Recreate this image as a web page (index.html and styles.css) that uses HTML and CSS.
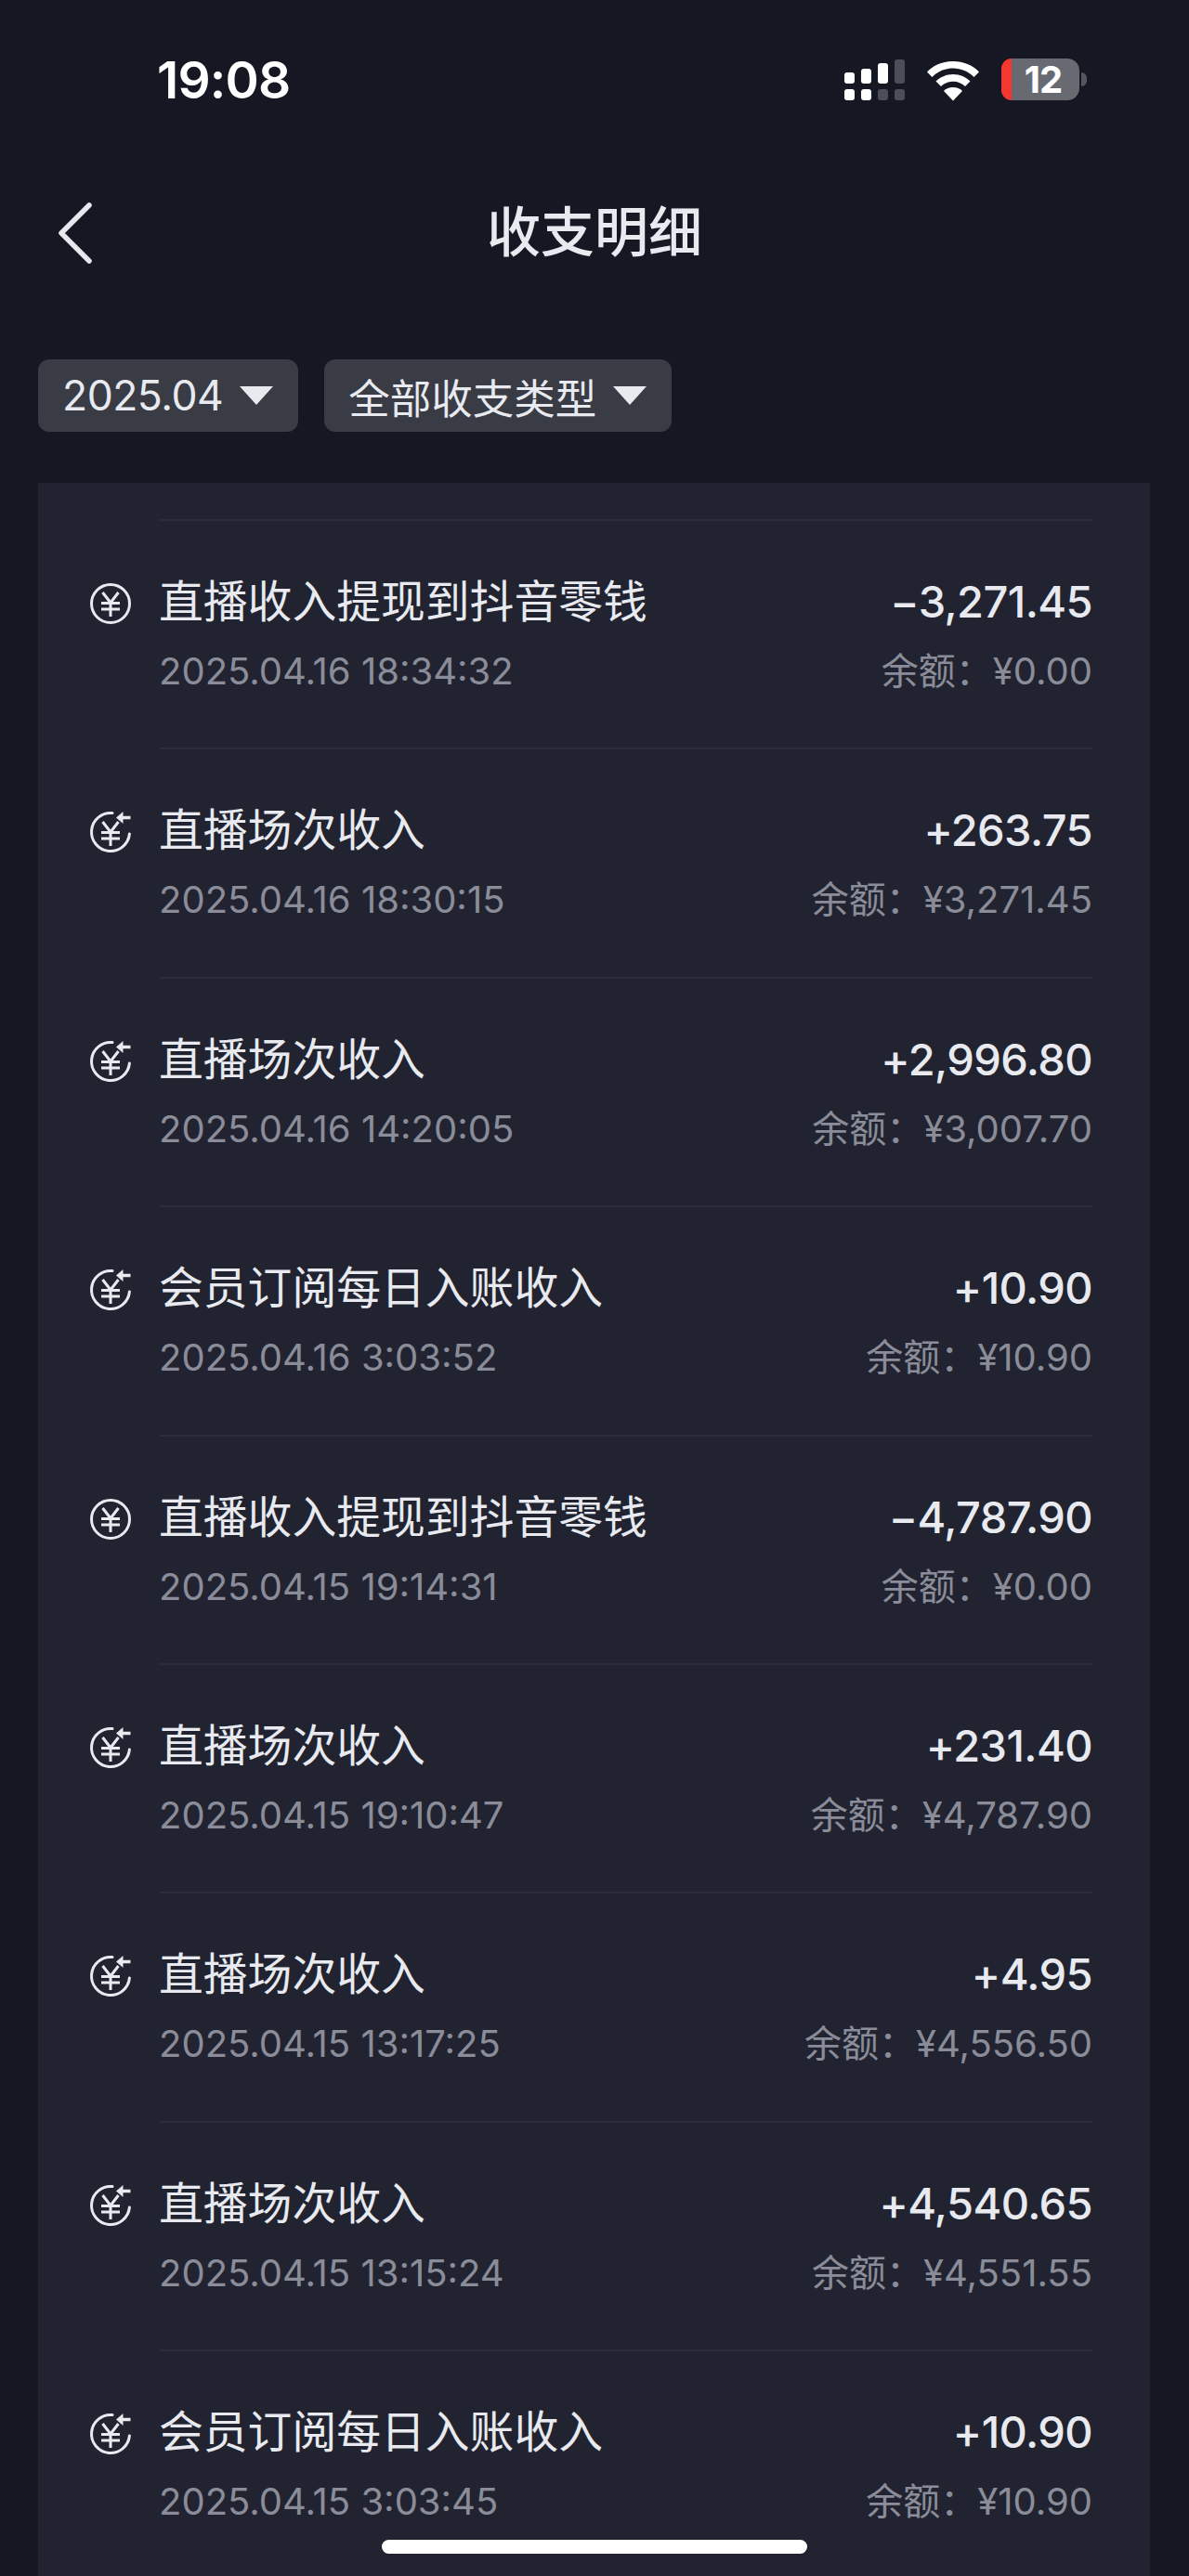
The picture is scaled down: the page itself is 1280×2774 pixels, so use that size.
FILE: index.html
```html
<!DOCTYPE html>
<html lang="zh-CN">
<head>
<meta charset="utf-8">
<title>收支明细</title>
<link rel="stylesheet" href="styles.css">
</head>
<body>
<svg class="defs" width="0" height="0" aria-hidden="true">
  <symbol id="yen-out" viewBox="0 0 50 50">
    <circle cx="25" cy="25" r="20.500" fill="none" stroke="currentColor" stroke-width="3"/>
    <path d="M16.500 13l8.500 11 8.500-11M15 24.500h20M15 31h20M25 24v15" fill="none" stroke="currentColor" stroke-width="3"/>
  </symbol>
  <symbol id="yen-in" viewBox="0 0 50 50">
    <path d="M45.400 27A20.500 20.500 0 1 1 27 4.600" fill="none" stroke="currentColor" stroke-width="3" stroke-linecap="round"/>
    <path d="M46.500 9.500H37" fill="none" stroke="currentColor" stroke-width="3.500"/>
    <path d="M31 9.500l7.500-6.500v13z" fill="currentColor"/>
    <path d="M16.500 14l8.500 11 8.500-11M15 25.500h20M15 32h20M25 25v15" fill="none" stroke="currentColor" stroke-width="3"/>
  </symbol>
</svg>

<header class="status">
  <span class="time">19:08</span>
  <div class="status-icons">
    <svg class="signal" width="66" height="46" viewBox="0 0 66 46">
      <g fill="#fff">
        <rect x="1" y="15" width="11" height="12" rx="3"/>
        <rect x="19" y="11" width="11" height="16" rx="3"/>
        <rect x="37" y="5" width="11" height="22" rx="3"/>
        <rect x="1" y="33" width="11" height="12" rx="3"/>
        <rect x="19" y="33" width="11" height="12" rx="3"/>
      </g>
      <g fill="#4b4d57">
        <rect x="55" y="1" width="11" height="26" rx="3"/>
        <rect x="37" y="33" width="11" height="12" rx="3"/>
        <rect x="55" y="33" width="11" height="12" rx="3"/>
      </g>
    </svg>
    <svg class="wifi" width="58" height="44" viewBox="0 0 58 44">
      <path d="M29 1C18 1 8 5 1 12.500l5.500 5.500C12.500 12 20.500 8.500 29 8.500S45.500 12 51.500 18l5.500-5.500C50 5 40 1 29 1z" fill="#fff"/>
      <path d="M29 15c-7.500 0-14 3-18.500 7.500l5.500 5.500c3.500-3.300 8-5.300 13-5.300s9.500 2 13 5.300l5.500-5.500C43 18 36.500 15 29 15z" fill="#fff"/>
      <path d="M29 29c-4 0-7.500 1.500-10 4l10 10.500L39 33c-2.500-2.500-6-4-10-4z" fill="#fff"/>
    </svg>
    <div class="battery">
      <span class="battery-red"></span>
      <span class="battery-num">12</span>
      <span class="battery-nub"></span>
    </div>
  </div>
</header>

<nav class="navbar">
  <svg class="back" width="38" height="66" viewBox="0 0 38 66">
    <path d="M34 3L4 33l30 30" fill="none" stroke="#e6e8ee" stroke-width="5.500" stroke-linecap="round" stroke-linejoin="round"/>
  </svg>
  <h1 class="page-title">收支明细</h1>
</nav>

<div class="filters">
  <div class="pill"><span class="pill-num">2025.04</span><i class="caret"></i></div>
  <div class="pill"><span>全部收支类型</span><i class="caret"></i></div>
</div>

<main class="card">
  <div class="row">
    <svg class="icon"><use href="#yen-out"/></svg>
    <div class="row-body">
      <div class="line"><span class="name">直播收入提现到抖音零钱</span><span class="amount">−3,271.45</span></div>
      <div class="line sub"><span>2025.04.16 18:34:32</span><span>余额：¥0.00</span></div>
    </div>
  </div>
  <div class="row">
    <svg class="icon"><use href="#yen-in"/></svg>
    <div class="row-body">
      <div class="line"><span class="name">直播场次收入</span><span class="amount">+263.75</span></div>
      <div class="line sub"><span>2025.04.16 18:30:15</span><span>余额：¥3,271.45</span></div>
    </div>
  </div>
  <div class="row">
    <svg class="icon"><use href="#yen-in"/></svg>
    <div class="row-body">
      <div class="line"><span class="name">直播场次收入</span><span class="amount">+2,996.80</span></div>
      <div class="line sub"><span>2025.04.16 14:20:05</span><span>余额：¥3,007.70</span></div>
    </div>
  </div>
  <div class="row">
    <svg class="icon"><use href="#yen-in"/></svg>
    <div class="row-body">
      <div class="line"><span class="name">会员订阅每日入账收入</span><span class="amount">+10.90</span></div>
      <div class="line sub"><span>2025.04.16 3:03:52</span><span>余额：¥10.90</span></div>
    </div>
  </div>
  <div class="row">
    <svg class="icon"><use href="#yen-out"/></svg>
    <div class="row-body">
      <div class="line"><span class="name">直播收入提现到抖音零钱</span><span class="amount">−4,787.90</span></div>
      <div class="line sub"><span>2025.04.15 19:14:31</span><span>余额：¥0.00</span></div>
    </div>
  </div>
  <div class="row">
    <svg class="icon"><use href="#yen-in"/></svg>
    <div class="row-body">
      <div class="line"><span class="name">直播场次收入</span><span class="amount">+231.40</span></div>
      <div class="line sub"><span>2025.04.15 19:10:47</span><span>余额：¥4,787.90</span></div>
    </div>
  </div>
  <div class="row">
    <svg class="icon"><use href="#yen-in"/></svg>
    <div class="row-body">
      <div class="line"><span class="name">直播场次收入</span><span class="amount">+4.95</span></div>
      <div class="line sub"><span>2025.04.15 13:17:25</span><span>余额：¥4,556.50</span></div>
    </div>
  </div>
  <div class="row">
    <svg class="icon"><use href="#yen-in"/></svg>
    <div class="row-body">
      <div class="line"><span class="name">直播场次收入</span><span class="amount">+4,540.65</span></div>
      <div class="line sub"><span>2025.04.15 13:15:24</span><span>余额：¥4,551.55</span></div>
    </div>
  </div>
  <div class="row">
    <svg class="icon"><use href="#yen-in"/></svg>
    <div class="row-body">
      <div class="line"><span class="name">会员订阅每日入账收入</span><span class="amount">+10.90</span></div>
      <div class="line sub"><span>2025.04.15 3:03:45</span><span>余额：¥10.90</span></div>
    </div>
  </div>
</main>

<div class="home-bar"></div>
</body>
</html>
```
FILE: styles.css
```css
* { box-sizing: border-box; }
html, body { margin: 0; padding: 0; }
body {
  position: relative;
  width: 1280px;
  height: 2774px;
  overflow: hidden;
  background: #151823;
  color: #e8eaf0;
  font-family: Inter, "Noto Sans CJK SC", sans-serif;
  display: flex;
  flex-direction: column;
}
.defs { position: absolute; }

.status {
  height: 172px;
  padding: 56px 118px 0 169px;
  display: flex;
  justify-content: space-between;
  align-items: flex-start;
}
.time { font-size: 55px; line-height: 60px; font-weight: 600; color: #fff; letter-spacing: -0.8px; }
.status-icons { display: flex; align-items: flex-start; padding-top: 7px; }
.signal { margin-right: 23px; }
.wifi { margin-right: 23px; margin-top: 2px; }
.battery {
  position: relative;
  width: 84px;
  height: 45px;
  border-radius: 13px;
  background: #686a72;
  display: flex;
  justify-content: center;
  align-items: center;
}
.battery-red {
  position: absolute;
  left: 0; top: 0; bottom: 0;
  width: 11px;
  background: #f4372f;
  border-radius: 13px 0 0 13px;
}
.battery-num { font-size: 40px; line-height: 45px; font-weight: 700; color: #fff; margin-left: 6px; letter-spacing: -1px; }
.battery-nub {
  position: absolute;
  right: -8px; top: 15px;
  width: 6px; height: 15px;
  border-radius: 0 6px 6px 0;
  background: #55575f;
}

.navbar {
  height: 215px;
  position: relative;
  display: flex;
  justify-content: center;
  align-items: flex-start;
  padding-top: 38px;
}
.back { position: absolute; left: 62px; top: 46px; }
.page-title {
  margin: 0;
  font-size: 58px;
  line-height: 80px;
  font-weight: 500;
  color: #e8eaf0;
}

.filters {
  height: 133px;
  padding-left: 41px;
  display: flex;
  gap: 28px;
  align-items: flex-start;
}
.pill {
  height: 78px;
  padding: 0 27px 0 26px;
  background: #393b45;
  border-radius: 12px;
  display: flex;
  align-items: center;
  gap: 18px;
  font-size: 44.500px;
  color: #e8eaf0;
}
.pill-num { letter-spacing: -0.5px; }
.caret {
  width: 0; height: 0;
  border-left: 18px solid transparent;
  border-right: 18px solid transparent;
  border-top: 20px solid #e8eaf0;
}

.card {
  margin: 0 42px 0 41px;
  flex: 1;
  background: #212430;
  padding-top: 39px;
  overflow: hidden;
}
.row {
  height: 246.400px;
  padding-left: 130px;
  padding-right: 62px;
  position: relative;
}
.icon {
  position: absolute;
  left: 53px;
  top: 66px;
  width: 50px;
  height: 50px;
  color: #e8eaf0;
}
.row-body {
  height: 100%;
  border-top: 2px solid #2a2d39;
  padding-top: 52px;
}
.line { display: flex; justify-content: space-between; align-items: center; }
.name { font-size: 47.800px; line-height: 70px; color: #e8eaf0; }
.amount { font-size: 47px; line-height: 70px; font-weight: 500; color: #e8eaf0; letter-spacing: -0.6px; }
.sub { margin-top: 5px; font-size: 40px; line-height: 70px; color: #8a8d99; }

.home-bar {
  position: absolute;
  left: 411px;
  top: 2735px;
  width: 458px;
  height: 15px;
  border-radius: 8px;
  background: #fff;
}
```
